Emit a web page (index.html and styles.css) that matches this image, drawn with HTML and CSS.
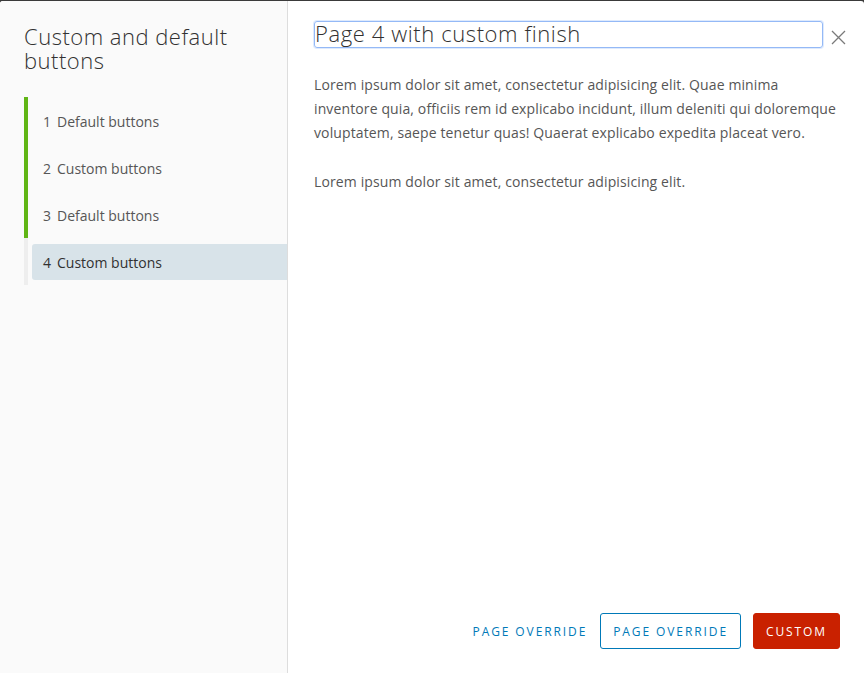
FILE: index.html
```html
<!DOCTYPE html>
<html>
<head>
<meta charset="utf-8">
<link rel="stylesheet" href="styles.css">
</head>
<body>
<div class="modal">
  <aside class="nav">
    <h1 class="nav-title">Custom and default buttons</h1>
    <ol class="steps">
      <li class="step done"><span class="step-inner"><span class="num">1</span>Default buttons</span></li>
      <li class="step done"><span class="step-inner"><span class="num">2</span>Custom buttons</span></li>
      <li class="step done"><span class="step-inner"><span class="num">3</span>Default buttons</span></li>
      <li class="step current"><span class="step-inner"><span class="num">4</span>Custom buttons</span></li>
    </ol>
  </aside>
  <main class="content">
    <header class="content-header">
      <h2 class="page-title">Page 4 with custom finish</h2>
      <button class="close" aria-label="Close">
        <svg width="15" height="15" viewBox="0 0 15 15"><path d="M1 1 L14 14 M14 1 L1 14" stroke="#7a7a7a" stroke-width="1.3" fill="none"/></svg>
      </button>
    </header>
    <div class="body">
      <p>Lorem ipsum dolor sit amet, consectetur adipisicing elit. Quae minima<br>inventore quia, officiis rem id explicabo incidunt, illum deleniti qui doloremque<br>voluptatem, saepe tenetur quas! Quaerat explicabo expedita placeat vero.</p>
      <p>Lorem ipsum dolor sit amet, consectetur adipisicing elit.</p>
    </div>
    <footer class="footer">
      <button class="btn btn-link">Page Override</button>
      <button class="btn btn-outline">Page Override</button>
      <button class="btn btn-danger">Custom</button>
    </footer>
  </main>
</div>
</body>
</html>
```
FILE: styles.css
```css
* { box-sizing: border-box; }
html, body { margin: 0; padding: 0; }
body {
  background: #3a3a3a;
  font-family: "Open Sans", "Noto Sans", sans-serif;
  height: 673px;
  overflow: hidden;
}
.modal {
  margin-top: 1px;
  height: 672px;
  display: flex;
  background: #fff;
  border-radius: 3px 3px 0 0;
  overflow: hidden;
}
.nav {
  width: 288px;
  flex: none;
  background: #fafafa;
  border-right: 1px solid #dddddd;
  padding: 23px 0 0 24px;
}
.nav-title {
  margin: 0;
  font-size: 22px;
  line-height: 24px;
  font-weight: 300;
  letter-spacing: 0.5px;
  color: #313131;
  padding-right: 30px;
}
.steps {
  list-style: none;
  margin: 25px 0 0 0;
  padding: 0;
}
.step {
  border-left: 4px solid #eeeeee;
  padding: 6px 0 5px 4px;
}
.step.done { border-left-color: #60b515; }
.step-inner {
  display: flex;
  align-items: center;
  height: 36px;
  padding-left: 11px;
  font-size: 14px;
  color: #565656;
  border-radius: 3px 0 0 3px;
}
.num { margin-right: 6px; }
.step.current .step-inner {
  background: #d8e3e9;
  color: #313131;
}
.content {
  flex: 1;
  display: flex;
  flex-direction: column;
  padding: 20px 24px 24px 26px;
}
.content-header {
  display: flex;
  align-items: center;
}
.page-title {
  flex: 1;
  margin: 0;
  height: 27px;
  border: 1px solid #94b9f6;
  box-shadow: 0 0 0 1px rgba(160,195,250,0.35);
  border-radius: 3px;
  font-size: 22px;
  line-height: 23px;
  font-weight: 300;
  letter-spacing: 0.6px;
  color: #313131;
  padding: 0;
  white-space: nowrap;
}
.close {
  border: 0;
  background: none;
  padding: 0;
  margin: 6px -11px 0 2px;
  width: 26px;
  height: 16px;
  display: flex;
  align-items: center;
  justify-content: center;
}
.body {
  flex: 1;
  padding-top: 25px;
}
.body p {
  margin: 0 0 25px 0;
  font-size: 14px;
  line-height: 24px;
  letter-spacing: 0.12px;
  color: #565656;
  white-space: nowrap;
}
.footer {
  display: flex;
  justify-content: flex-end;
  gap: 12px;
}
.btn {
  height: 36px;
  padding: 0 12px;
  font-family: inherit;
  font-size: 12px;
  font-weight: 500;
  letter-spacing: 1.9px;
  text-transform: uppercase;
  border-radius: 3px;
  border: 1px solid transparent;
  background: none;
  cursor: pointer;
}
.btn-link { color: #0079b8; margin-right: -12px; }
.btn-outline { color: #0079b8; border-color: #0079b8; background: #fff; }
.btn-danger { color: #fff; background: #c92100; border-color: #c92100; }
```
